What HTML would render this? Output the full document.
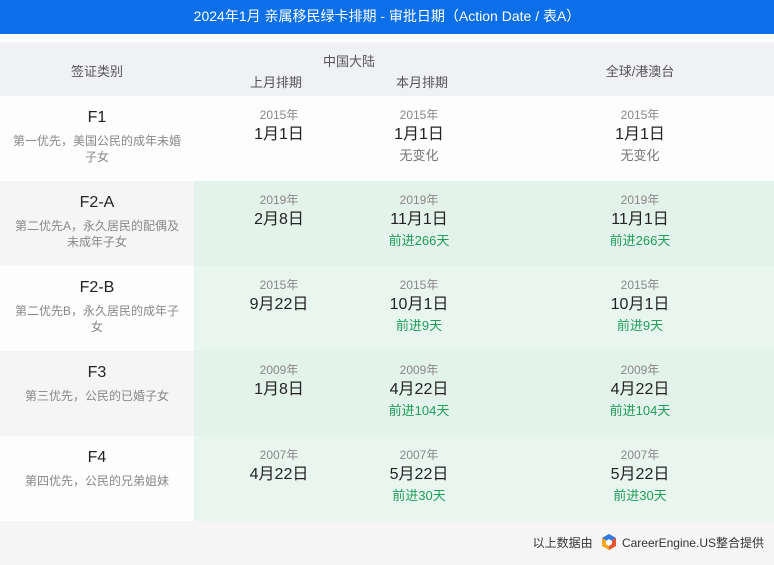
<!DOCTYPE html>
<html><head><meta charset="utf-8"><style>
*{margin:0;padding:0;box-sizing:border-box}
body{width:774px;height:565px;background:#f5f5f5;font-family:"Liberation Sans","Noto Sans CJK SC",sans-serif;position:relative;overflow:hidden}
.top{position:absolute;left:0;top:0;width:774px;height:34px;background:#0a6fe8;color:#fff;font-size:14px;text-align:center;line-height:33px}
.gap{position:absolute;left:0;top:34px;width:774px;height:8px;background:#fff}
.hd{position:absolute;left:0;top:42px;width:774px;height:54px;background:#f0f1f4;color:#555;font-size:13px}
.hd span{position:absolute;transform:translateX(-50%);white-space:nowrap}
.row{position:absolute;left:0;width:774px;height:85px}
.l{position:absolute;left:0;top:0;width:194px;height:85px;text-align:center}
.r{position:absolute;left:194px;top:0;width:580px;height:85px}
.f{font-size:16px;color:#222;margin-top:12px;line-height:20px}
.d{font-size:12px;color:#888;line-height:16px;padding:5px 12px 0}
.c{position:absolute;top:0;width:140px;text-align:center;transform:translateX(-50%)}
.y{font-size:12px;color:#888;margin-top:11px;line-height:16px}
.t{font-size:16px;color:#222;line-height:20px;margin-top:2px}
.g{font-size:13px;color:#1f9d5a;line-height:22px}
.n{font-size:13px;color:#777;line-height:22px}
.ft{position:absolute;right:10px;top:533px;font-size:12px;color:#333;display:flex;align-items:center}
</style></head><body>
<div class="top">2024年1月 亲属移民绿卡排期 - 审批日期（Action Date / 表A）</div>
<div class="gap"></div>
<div class="hd">
<span style="left:97px;top:19px">签证类别</span>
<span style="left:349px;top:9px">中国大陆</span>
<span style="left:276px;top:30px">上月排期</span>
<span style="left:422px;top:30px">本月排期</span>
<span style="left:640px;top:19px">全球/港澳台</span>
</div>

<div class="row" style="top:96px;background:#fdfdfd">
<div class="l"><div class="f">F1</div><div class="d">第一优先，美国公民的成年未婚子女</div></div>
<div class="c" style="left:279px"><div class="y">2015年</div><div class="t">1月1日</div></div>
<div class="c" style="left:419px"><div class="y">2015年</div><div class="t">1月1日</div><div class="n">无变化</div></div>
<div class="c" style="left:640px"><div class="y">2015年</div><div class="t">1月1日</div><div class="n">无变化</div></div>
</div>

<div class="row" style="top:181px;background:#f5f5f5">
<div class="r" style="background:#e3f2ea"></div>
<div class="l"><div class="f">F2-A</div><div class="d">第二优先A，永久居民的配偶及未成年子女</div></div>
<div class="c" style="left:279px"><div class="y">2019年</div><div class="t">2月8日</div></div>
<div class="c" style="left:419px"><div class="y">2019年</div><div class="t">11月1日</div><div class="g">前进266天</div></div>
<div class="c" style="left:640px"><div class="y">2019年</div><div class="t">11月1日</div><div class="g">前进266天</div></div>
</div>

<div class="row" style="top:266px;background:#fdfdfd">
<div class="r" style="background:#e9f6ef"></div>
<div class="l"><div class="f">F2-B</div><div class="d">第二优先B，永久居民的成年子女</div></div>
<div class="c" style="left:279px"><div class="y">2015年</div><div class="t">9月22日</div></div>
<div class="c" style="left:419px"><div class="y">2015年</div><div class="t">10月1日</div><div class="g">前进9天</div></div>
<div class="c" style="left:640px"><div class="y">2015年</div><div class="t">10月1日</div><div class="g">前进9天</div></div>
</div>

<div class="row" style="top:351px;background:#f5f5f5">
<div class="r" style="background:#e3f2ea"></div>
<div class="l"><div class="f">F3</div><div class="d">第三优先，公民的已婚子女</div></div>
<div class="c" style="left:279px"><div class="y">2009年</div><div class="t">1月8日</div></div>
<div class="c" style="left:419px"><div class="y">2009年</div><div class="t">4月22日</div><div class="g">前进104天</div></div>
<div class="c" style="left:640px"><div class="y">2009年</div><div class="t">4月22日</div><div class="g">前进104天</div></div>
</div>

<div class="row" style="top:436px;background:#fdfdfd">
<div class="r" style="background:#e9f6ef"></div>
<div class="l"><div class="f">F4</div><div class="d">第四优先，公民的兄弟姐妹</div></div>
<div class="c" style="left:279px"><div class="y">2007年</div><div class="t">4月22日</div></div>
<div class="c" style="left:419px"><div class="y">2007年</div><div class="t">5月22日</div><div class="g">前进30天</div></div>
<div class="c" style="left:640px"><div class="y">2007年</div><div class="t">5月22日</div><div class="g">前进30天</div></div>
</div>

<div class="ft">以上数据由&nbsp;
<svg width="18" height="18" viewBox="0 0 18 18" style="margin:0 4px"><polygon points="9,1 16,5 16,13 9,17 2,13 2,5" fill="#f5a623"/><polygon points="9,1 16,5 9,9 2,5" fill="#2e7be6"/><polygon points="9,9 16,5 16,13 9,17" fill="#e8542c"/><polygon points="9,6 12,8 12,11 9,13 6,11 6,8" fill="#fff"/></svg>
CareerEngine.US整合提供</div>
</body></html>
